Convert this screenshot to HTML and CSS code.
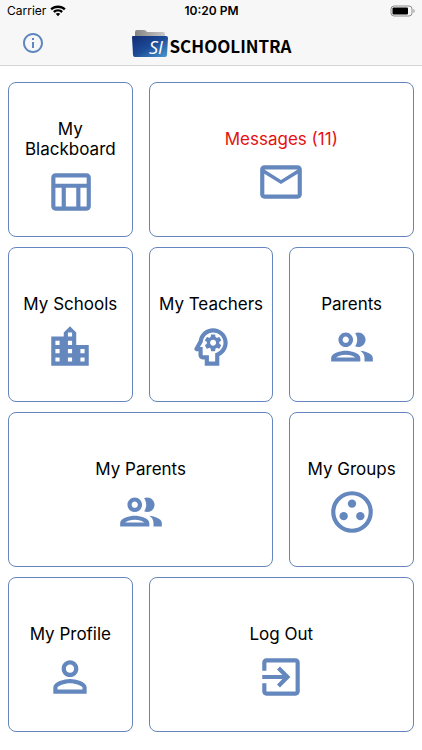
FILE: index.html
```html
<!DOCTYPE html>
<html lang="en">
<head>
<meta charset="utf-8">
<meta name="viewport" content="width=device-width, initial-scale=1">
<title>SchoolIntra</title>
<link rel="stylesheet" href="styles.css">
</head>
<body>
<header class="top">
  <div class="status">
    <div class="carrier">
      <span>Carrier</span>
      <svg class="wifi" viewBox="0 0 16 12" aria-hidden="true"><path d="M8 .6C5 .6 2.300 1.700.3 3.600L2 5.300C3.600 3.900 5.700 3 8 3s4.400.9 6 2.300l1.700-1.700C13.700 1.700 11 .6 8 .6z"/><path d="M8 4.300c-1.900 0-3.600.7-4.900 1.900l1.700 1.700C5.600 7.100 6.700 6.600 8 6.600s2.400.5 3.200 1.300l1.700-1.700C11.600 5 9.900 4.300 8 4.300z"/><path d="M8 7.900c-.9 0-1.700.3-2.300.9L8 11.300l2.300-2.500c-.6-.6-1.400-.9-2.300-.9z"/></svg>
    </div>
    <time class="clock">10:20 PM</time>
    <svg class="battery" viewBox="0 0 26 12" aria-hidden="true"><rect class="battery-case" x="1" y="1" width="21" height="10" rx="3"/><rect x="2.500" y="2.500" width="15.500" height="7" rx="1"/><path class="battery-tip" d="M23.500 4v4c1.500-.5 1.500-3.500 0-4z"/></svg>
  </div>
  <nav class="bar">
    <button class="info" type="button" aria-label="Information">
      <svg viewBox="0 0 24 24" aria-hidden="true"><path d="M11 7h2v2h-2zm0 4h2v6h-2zm1-9C6.480 2 2 6.480 2 12s4.480 10 10 10 10-4.480 10-10S17.520 2 12 2zm0 18c-4.410 0-8-3.590-8-8s3.590-8 8-8 8 3.590 8 8-3.590 8-8 8z"/></svg>
    </button>
    <div class="brand">
      <svg class="folder" viewBox="0 0 38 30" role="img" aria-label="SI">
        <defs>
          <linearGradient id="front" x1="0" y1="0" x2="1" y2="1"><stop offset="0" stop-color="#122c73"/><stop offset=".5" stop-color="#1d4b98"/><stop offset="1" stop-color="#4b9bd0"/></linearGradient>
          <linearGradient id="back" x1="0" y1="0" x2="1" y2="0"><stop offset="0" stop-color="#858585"/><stop offset="1" stop-color="#c8c8c8"/></linearGradient>
        </defs>
        <path fill="url(#back)" d="M4 8V3q0-2 2-2h7q2 0 3 2h16q2 0 2 2v5H4z"/>
        <path fill="url(#front)" d="M2 7h33q2 0 2 2l-1 17q0 2-2 2H4q-2 0-2-2L1 8q0-1 1-1z"/>
        <text class="mark" x="18" y="25">SI</text>
      </svg>
      <span class="name">SCHOOLINTRA</span>
    </div>
  </nav>
</header>
<main class="tiles">
  <a class="tile" href="#blackboard"><span>My<br>Blackboard</span>
    <svg viewBox="0 0 24 24" aria-hidden="true"><path d="M20 3H5c-1.100 0-2 .9-2 2v14c0 1.100.9 2 2 2h15c1.100 0 2-.9 2-2V5c0-1.100-.9-2-2-2zm0 2v3H5V5h15zm-5 14h-5v-9h5v9zM5 10h3v9H5v-9zm12 9v-9h3v9h-3z"/></svg></a>
  <a class="tile wide unread" href="#messages"><span>Messages (11)</span>
    <svg viewBox="0 0 24 24" aria-hidden="true"><path d="M22 6c0-1.100-.9-2-2-2H4c-1.100 0-2 .9-2 2v12c0 1.100.9 2 2 2h16c1.100 0 2-.9 2-2V6zm-2 0l-8 5-8-5h16zm0 12H4V8l8 5 8-5v10z"/></svg></a>
  <a class="tile" href="#schools"><span>My Schools</span>
    <svg viewBox="0 0 24 24" aria-hidden="true"><path d="M15 11V5l-3-3-3 3v2H3v14h18V11h-6zm-8 8H5v-2h2v2zm0-4H5v-2h2v2zm0-4H5V9h2v2zm6 8h-2v-2h2v2zm0-4h-2v-2h2v2zm0-4h-2V9h2v2zm0-4h-2V5h2v2zm6 12h-2v-2h2v2zm0-4h-2v-2h2v2z"/></svg></a>
  <a class="tile" href="#teachers"><span>My Teachers</span>
    <svg viewBox="0 0 24 24" aria-hidden="true"><path d="M19.940 9.060C19.500 5.730 16.570 3 13 3 9.470 3 6.570 5.610 6.080 9l-1.930 3.480C3.740 13.140 4.220 14 5 14h1v2c0 1.100.9 2 2 2h1v3h7v-4.680c2.620-1.250 4.350-4.080 3.940-7.260zm-5.050 5.570l-.89.42V19h-3v-3H8v-4H6.700l1.330-2.330C8.210 7.060 10.350 5 13 5c2.760 0 5 2.240 5 5 0 2.090-1.290 3.880-3.110 4.630z"/><path fill-rule="evenodd" d="M16 10c0 .13-.01.26-.02.39l.83.66c.08.06.1.16.05.25l-.8 1.390c-.05.09-.16.12-.24.09l-.99-.4c-.21.16-.43.29-.67.39L14 13.830c-.01.1-.1.17-.2.17h-1.600c-.1 0-.18-.07-.2-.17l-.15-1.060c-.25-.1-.47-.23-.68-.39l-.99.4c-.09.03-.2 0-.25-.09l-.8-1.390c-.05-.08-.03-.19.05-.25l.84-.66c-.01-.13-.02-.26-.02-.39s.02-.27.04-.39l-.85-.66c-.08-.06-.1-.16-.05-.26l.8-1.380c.05-.09.15-.12.24-.09l1 .4c.2-.15.43-.29.67-.39L12 6.170c.02-.1.1-.17.2-.17h1.600c.1 0 .18.07.2.17l.15 1.060c.24.1.46.23.67.39l1-.4c.09-.03.2 0 .24.09l.8 1.380c.05.09.03.2-.05.26l-.85.66c.03.12.04.25.04.39zM13 8.570c-.79 0-1.430.64-1.430 1.430s.64 1.430 1.430 1.430 1.430-.64 1.430-1.430-.64-1.430-1.430-1.430z"/></svg></a>
  <a class="tile" href="#parents"><span>Parents</span>
    <svg viewBox="0 0 24 24" aria-hidden="true"><path id="people" d="M9 13.750c-2.340 0-7 1.170-7 3.500V19h14v-1.750c0-2.330-4.660-3.500-7-3.500zM4.340 17c.84-.58 2.870-1.250 4.660-1.250s3.820.67 4.660 1.250H4.340zM9 12c1.930 0 3.500-1.570 3.500-3.500S10.930 5 9 5 5.500 6.570 5.500 8.500 7.070 12 9 12zm0-5c.83 0 1.500.67 1.500 1.500S9.830 10 9 10s-1.500-.67-1.500-1.500S8.170 7 9 7zm7.040 6.810c1.160.84 1.960 1.960 1.960 3.440V19h4v-1.750c0-2.020-3.500-3.170-5.960-3.440zM15 12c1.930 0 3.500-1.570 3.500-3.500S16.930 5 15 5c-.54 0-1.040.13-1.500.35.63.89 1 1.980 1 3.150s-.37 2.260-1 3.150c.46.22.96.35 1.500.35z"/></svg></a>
  <a class="tile wide" href="#my-parents"><span>My Parents</span>
    <svg viewBox="0 0 24 24" aria-hidden="true"><use href="#people"/></svg></a>
  <a class="tile" href="#groups"><span>My Groups</span>
    <svg viewBox="0 0 24 24" aria-hidden="true"><circle class="ring" cx="12" cy="12" r="9"/><circle cx="12" cy="8" r="2"/><circle cx="8" cy="14" r="2"/><circle cx="16" cy="14" r="2"/></svg></a>
  <a class="tile" href="#profile"><span>My Profile</span>
    <svg viewBox="0 0 24 24" aria-hidden="true"><path d="M12 6c1.100 0 2 .9 2 2s-.9 2-2 2-2-.9-2-2 .9-2 2-2m0 9c2.700 0 5.800 1.290 6 2v1H6v-.99c.2-.72 3.300-2.010 6-2.010m0-11C9.790 4 8 5.790 8 8s1.790 4 4 4 4-1.790 4-4-1.790-4-4-4zm0 9c-2.670 0-8 1.340-8 4v3h16v-3c0-2.660-5.330-4-8-4z"/></svg></a>
  <a class="tile wide" href="#logout"><span>Log Out</span>
    <svg viewBox="0 0 24 24" aria-hidden="true"><path d="M10.090 15.590L11.500 17l5-5-5-5-1.410 1.410L12.670 11H3v2h9.670l-2.580 2.590zM19 3H5c-1.110 0-2 .9-2 2v4h2V5h14v14H5v-4H3v4c0 1.100.89 2 2 2h14c1.100 0 2-.9 2-2V5c0-1.100-.9-2-2-2z"/></svg></a>
</main>
</body>
</html>
```
FILE: styles.css
```css
* {
  box-sizing: border-box;
}

body {
  margin: 0;
  background: #fff;
  color: #000;
  font-family: Inter, "Liberation Sans", sans-serif;
}

.top {
  background: #f7f7f7;
  border-bottom: 1px solid #d4d4d4;
}

.status {
  display: grid;
  grid-template-columns: 1fr auto 1fr;
  align-items: center;
  height: 21px;
  padding: 0 6px 0 7px;
  font-size: 12px;
}

.carrier {
  display: flex;
  align-items: center;
  gap: 4px;
}

.wifi {
  width: 16px;
  height: 12px;
}

.clock {
  font-weight: 600;
}

.battery {
  justify-self: end;
  width: 26px;
  height: 12px;
}

.battery-case {
  fill: none;
  stroke: #8c8c8c;
}

.battery-tip {
  fill: #8c8c8c;
}

.bar {
  display: grid;
  grid-template-columns: 1fr auto 1fr;
  align-items: center;
  height: 44px;
  padding: 0 21px;
}

.info {
  justify-self: start;
  width: 24px;
  height: 24px;
  padding: 0;
  border: 0;
  background: none;
}

.info svg {
  display: block;
  fill: #5f86c0;
}

.brand {
  display: flex;
  align-items: center;
  gap: 1px;
  padding-top: 2px;
}

.folder {
  width: 38px;
  height: 30px;
}

.mark {
  fill: #fff;
  font: italic 18px "Open Sans", sans-serif;
}

.name {
  font: 700 17px/24px "Noto Sans CJK SC", sans-serif;
  padding-top: 4px;
}

.tiles {
  display: grid;
  grid-template-columns: repeat(3, 1fr);
  grid-auto-rows: minmax(155px, auto);
  gap: 10px 16px;
  padding: 16px 8px;
}

.tile {
  display: flex;
  flex-direction: column;
  align-items: center;
  justify-content: center;
  gap: 8px;
  padding: 16px 8px 0;
  border: 1px solid #6485bd;
  border-radius: 8px;
  color: #000;
  font-size: 17px;
  line-height: 20px;
  text-align: center;
  text-decoration: none;
}

.tile svg {
  width: 50px;
  height: 50px;
  fill: #6487be;
}

.tile .ring {
  fill: none;
  stroke: #6487be;
  stroke-width: 2;
}

.wide {
  grid-column: span 2;
}

.tile.unread {
  color: #e60f0f;
}
```
